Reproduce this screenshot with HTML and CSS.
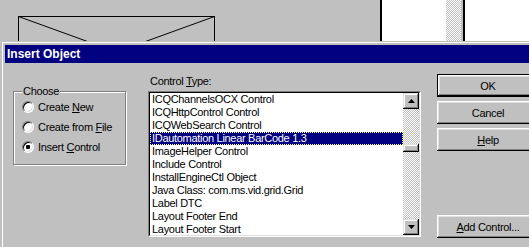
FILE: index.html
```html
<!DOCTYPE html>
<html lang="en">
<head>
    <meta charset="UTF-8">
    <title>Insert Object</title>
    <link rel="stylesheet" href="styles.css">
</head>
<body>

<!-- the editor window behind the dialog -->
<div class="desk">
    <div class="canvas">
        <svg class="placeholder" width="379" height="100" viewBox="0 0 379 100">
            <rect x="18.5" y="16.5" width="196" height="71" fill="none" stroke="#000"/>
            <line x1="18.5" y1="16.5" x2="214.5" y2="87.5" stroke="#000"/>
            <line x1="214.5" y1="16.5" x2="18.5" y2="87.5" stroke="#000"/>
        </svg>
    </div>
    <div class="rule"></div>
    <div class="pane"></div>
    <div class="dither"></div>
    <div class="edge"></div>
    <div class="pane"></div>
</div>

<div class="dialog">
    <div class="titlebar">Insert Object</div>

    <div class="panes">
        <fieldset class="choose">
            <legend>Choose</legend>
            <label class="radio"><input type="radio" name="choose"><span>Create <u>N</u>ew</span></label>
            <label class="radio"><input type="radio" name="choose"><span>Create from <u>F</u>ile</span></label>
            <label class="radio"><input type="radio" name="choose" checked><span>Insert <u>C</u>ontrol</span></label>
        </fieldset>

        <div class="types">
            <div class="caption">Control <u>T</u>ype:</div>
            <div class="listbox">
                <div class="listbox-in">
                    <ul class="items">
                        <li>ICQChannelsOCX Control</li>
                        <li>ICQHttpControl Control</li>
                        <li>ICQWebSearch Control</li>
                        <li class="sel">IDautomation Linear BarCode 1.3</li>
                        <li>ImageHelper Control</li>
                        <li>Include Control</li>
                        <li>InstallEngineCtl Object</li>
                        <li>Java Class: com.ms.vid.grid.Grid</li>
                        <li>Label DTC</li>
                        <li>Layout Footer End</li>
                        <li>Layout Footer Start</li>
                    </ul>
                    <div class="scrollbar">
                        <div class="arrow"><svg width="7" height="4" viewBox="0 0 7 4"><polygon points="3.5,0 7,4 0,4" fill="#000"/></svg></div>
                        <div class="track"><div class="thumb"></div></div>
                        <div class="arrow"><svg width="7" height="4" viewBox="0 0 7 4"><polygon points="0,0 7,0 3.5,4" fill="#000"/></svg></div>
                    </div>
                </div>
            </div>
        </div>

        <div class="buttons">
            <button class="default">OK</button>
            <button>Cancel</button>
            <button><u>H</u>elp</button>
            <button class="add"><u>A</u>dd Control...</button>
        </div>
    </div>
</div>

</body>
</html>
```

FILE: styles.css
```css
html, body { margin: 0; }
body {
    width: 529px; height: 247px; overflow: hidden; position: relative;
    background: #c0c0c0; color: #000;
    font-family: "Liberation Sans", Arial, sans-serif; font-size: 11px; letter-spacing: -0.3px;
}
u { text-decoration: underline; text-underline-offset: 1px; }

/* background window */
.desk         { display: flex; height: 247px; }
.desk .canvas { width: 380px; }
.desk .rule   { width: 2px; background: #000; }
.desk .pane   { flex: 1; background: #fff; }
.desk .dither { width: 15px; background-image: conic-gradient(#c0c0c0 25%, #fff 0 50%, #c0c0c0 0 75%, #fff 0); background-size: 2px 2px; }
.desk .edge   { width: 2px; border-left: 2px solid #c0c0c0; background: #000; }
.placeholder  { display: block; }

/* dialog window */
.dialog {
    position: absolute; top: 41px; left: 1px;
    width: 560px; height: 240px; box-sizing: border-box;
    padding: 3px; background: #c0c0c0;
    border: 1px solid #c0c0c0; box-shadow: inset 1px 1px #fff;
}
.titlebar {
    height: 18px; line-height: 18px; padding-left: 2px;
    background: #000080; color: #fff;
    font-weight: bold; font-size: 12px; letter-spacing: 0;
}
.panes { display: flex; align-items: flex-start; }

/* option group */
.choose {
    width: 113px; box-sizing: border-box;
    margin: 22px 0 0 8px; padding: 0 0 7px 8px;
    border: 1px solid #808080; box-shadow: inset 1px 1px #fff, 1px 1px #fff;
}
.choose legend { padding: 0 1px; line-height: 12px; background: #c0c0c0; }
.radio { display: flex; align-items: center; gap: 4px; height: 20px; white-space: nowrap; }
.radio input {
    appearance: none; -webkit-appearance: none;
    width: 12px; height: 12px; margin: 0; box-sizing: border-box;
    border-radius: 50%; background: #fff;
    border: 1px solid; border-color: #808080 #fff #fff #808080;
    box-shadow: inset 1px 1px #000, inset -1px -1px #dfdfdf;
}
.radio input:checked { background: radial-gradient(circle, #000 0 2px, #fff 2.5px); }

/* control type list */
.types   { margin-left: 22px; }
.caption { margin: 12px 0 3px 2px; line-height: 13px; }
.listbox {
    width: 273px; height: 146px; box-sizing: border-box;
    border: 1px solid; border-color: #808080 #fff #fff #808080;
}
.listbox-in {
    display: flex; height: 100%; box-sizing: border-box; background: #fff;
    border: 1px solid; border-color: #000 #dfdfdf #dfdfdf #000;
}
.items { flex: 1; margin: 0; padding: 0; list-style: none; overflow: hidden; }
.items li { height: 13px; line-height: 13px; padding-left: 2px; white-space: nowrap; }
.items li.sel { background: #000080; color: #fff; outline: 1px dotted #ffff80; outline-offset: -1px; }

.scrollbar { width: 16px; display: flex; flex-direction: column; }
.scrollbar .arrow {
    height: 16px; display: flex; align-items: center; justify-content: center;
    background: #c0c0c0;
    box-shadow: inset -1px -1px #000, inset 1px 1px #dfdfdf, inset -2px -2px #808080, inset 2px 2px #fff;
}
.scrollbar .arrow svg { display: block; }
.scrollbar .track {
    flex: 1;
    background-image: conic-gradient(#c0c0c0 25%, #fff 0 50%, #c0c0c0 0 75%, #fff 0); background-size: 2px 2px;
}
.scrollbar .thumb {
    height: 8px; margin-top: 35px; background: #c0c0c0;
    box-shadow: inset -1px -1px #000, inset 1px 1px #dfdfdf, inset -2px -2px #808080, inset 2px 2px #fff;
}

/* command buttons */
.buttons { display: flex; flex-direction: column; gap: 4px; margin: 11px 0 0 16px; }
.buttons button {
    width: 102px; height: 23px; padding: 0; box-sizing: border-box;
    font: inherit; letter-spacing: inherit; color: #000;
    background: #c0c0c0; border: 0;
    box-shadow: inset -1px -1px #000, inset 1px 1px #fff, inset -2px -2px #808080, inset 2px 2px #dfdfdf;
}
.buttons button.default { border: 1px solid #000; }
.buttons button.add { margin-top: 60px; }
```
